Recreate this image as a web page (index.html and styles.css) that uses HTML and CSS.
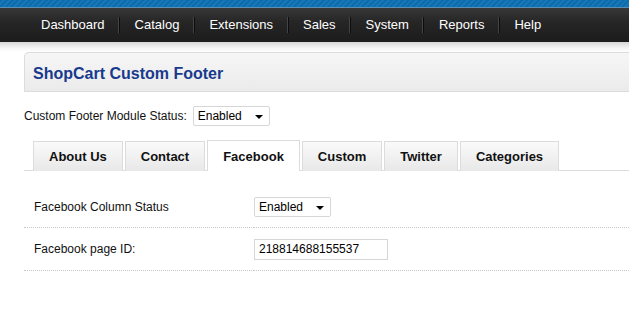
FILE: index.html
```html
<!DOCTYPE html>
<html lang="en">
<head>
  <meta charset="UTF-8" />
  <title>ShopCart Custom Footer</title>
  <link rel="stylesheet" href="styles.css">
</head>
<body>
  <div class="topbar"></div>
  <div class="menu">
    <ul>
      <li>Dashboard</li>
      <li>Catalog</li>
      <li>Extensions</li>
      <li>Sales</li>
      <li>System</li>
      <li>Reports</li>
      <li>Help</li>
    </ul>
  </div>
  <div class="menu-shadow"></div>

  <div class="content">
    <div class="box-heading">
      <h1>ShopCart Custom Footer</h1>
    </div>

    <div class="module-status">
      <label>Custom Footer Module Status:</label>
      <div class="select">Enabled <span class="caret"></span></div>
    </div>

    <div class="tabs">
      <a class="tab">About Us</a>
      <a class="tab">Contact</a>
      <a class="tab active">Facebook</a>
      <a class="tab">Custom</a>
      <a class="tab">Twitter</a>
      <a class="tab">Categories</a>
    </div>

    <table class="form">
      <tr>
        <td class="label">Facebook Column Status</td>
        <td><div class="select">Enabled <span class="caret"></span></div></td>
      </tr>
      <tr>
        <td class="label">Facebook page ID:</td>
        <td><div class="text-input">218814688155537</div></td>
      </tr>
    </table>
  </div>
</body>
</html>
```

FILE: styles.css
```css
body {
  margin: 0;
  font-family: "Liberation Sans", Arial, sans-serif;
  font-size: 12px;
  color: #000;
  background: #fff;
}

.topbar {
  height: 7px;
  background: repeating-linear-gradient(135deg, #0f6cab 0, #0f6cab 2px, #1678b8 2px, #1678b8 4px);
  border-bottom: 1px solid #5a8fb5;
}

.menu {
  height: 34px;
  background: linear-gradient(#383838, #262626 40%, #1c1c1c);
}

.menu ul {
  list-style: none;
  margin: 0;
  padding: 0 0 0 26.5px;
  display: flex;
  height: 34px;
  align-items: center;
}

.menu li {
  color: #fff;
  font-size: 13px;
  padding: 0 14.5px;
  line-height: 16px;
  border-left: 1px solid #0d0d0d;
  box-shadow: -1px 0 0 #444;
}

.menu li:first-child {
  border-left: none;
  box-shadow: none;
}

.menu-shadow {
  height: 10px;
  background: linear-gradient(#d6d6d6, #f4f4f4 60%, #fff);
}

.content {
  padding-left: 24px;
}

.box-heading {
  box-sizing: border-box;
  height: 40px;
  padding: 3px 0 0 8px;
  border: 1px solid #dcdcdc;
  border-right: none;
  border-radius: 5px 0 0 0;
  background: linear-gradient(#f6f6f6, #ebebeb);
  display: flex;
  align-items: center;
}

.box-heading h1 {
  margin: 0;
  font-size: 16px;
  font-weight: bold;
  color: #183a8c;
}

.module-status {
  display: flex;
  align-items: center;
  margin-top: 14px;
  height: 20px;
}

.module-status label {
  margin-right: 6px;
  color: #111;
}

.select {
  display: inline-flex;
  align-items: center;
  justify-content: space-between;
  box-sizing: border-box;
  width: 77px;
  height: 20px;
  padding: 0 6px 0 4px;
  border: 1px solid #d6d6d6;
  border-radius: 2px;
  background: #fff;
  font-size: 12px;
}

.caret {
  width: 0;
  height: 0;
  border-left: 4px solid transparent;
  border-right: 4px solid transparent;
  border-top: 4px solid #000;
  margin-top: 1px;
}

.tabs {
  display: flex;
  margin-top: 15px;
  padding-left: 9px;
  border-bottom: 1px solid #dcdcdc;
  height: 29px;
}

.tab {
  box-sizing: border-box;
  height: 30px;
  padding: 0 15px;
  margin-right: 2px;
  border: 1px solid #dcdcdc;
  border-bottom: none;
  background: linear-gradient(#fafafa, #e8e8e8);
  font-weight: bold;
  font-size: 13px;
  color: #111;
  display: flex;
  align-items: center;
  margin-bottom: -1px;
}

.tab.active {
  background: #fff;
  height: 31px;
  margin-top: -1px;
}

.form {
  border-collapse: collapse;
  width: 100%;
  margin-top: 16px;
}

.form td {
  height: 42px;
  padding: 0;
  border-bottom: 1px dotted #c8c8c8;
  vertical-align: middle;
}

.form tr:first-child td {
  height: 40px;
}

.form td.label {
  width: 220px;
  padding-left: 10px;
  color: #111;
}

.text-input {
  box-sizing: border-box;
  width: 134px;
  height: 21px;
  border: 1px solid #d6d6d6;
  padding-left: 4px;
  line-height: 19px;
  font-size: 12px;
}
```
